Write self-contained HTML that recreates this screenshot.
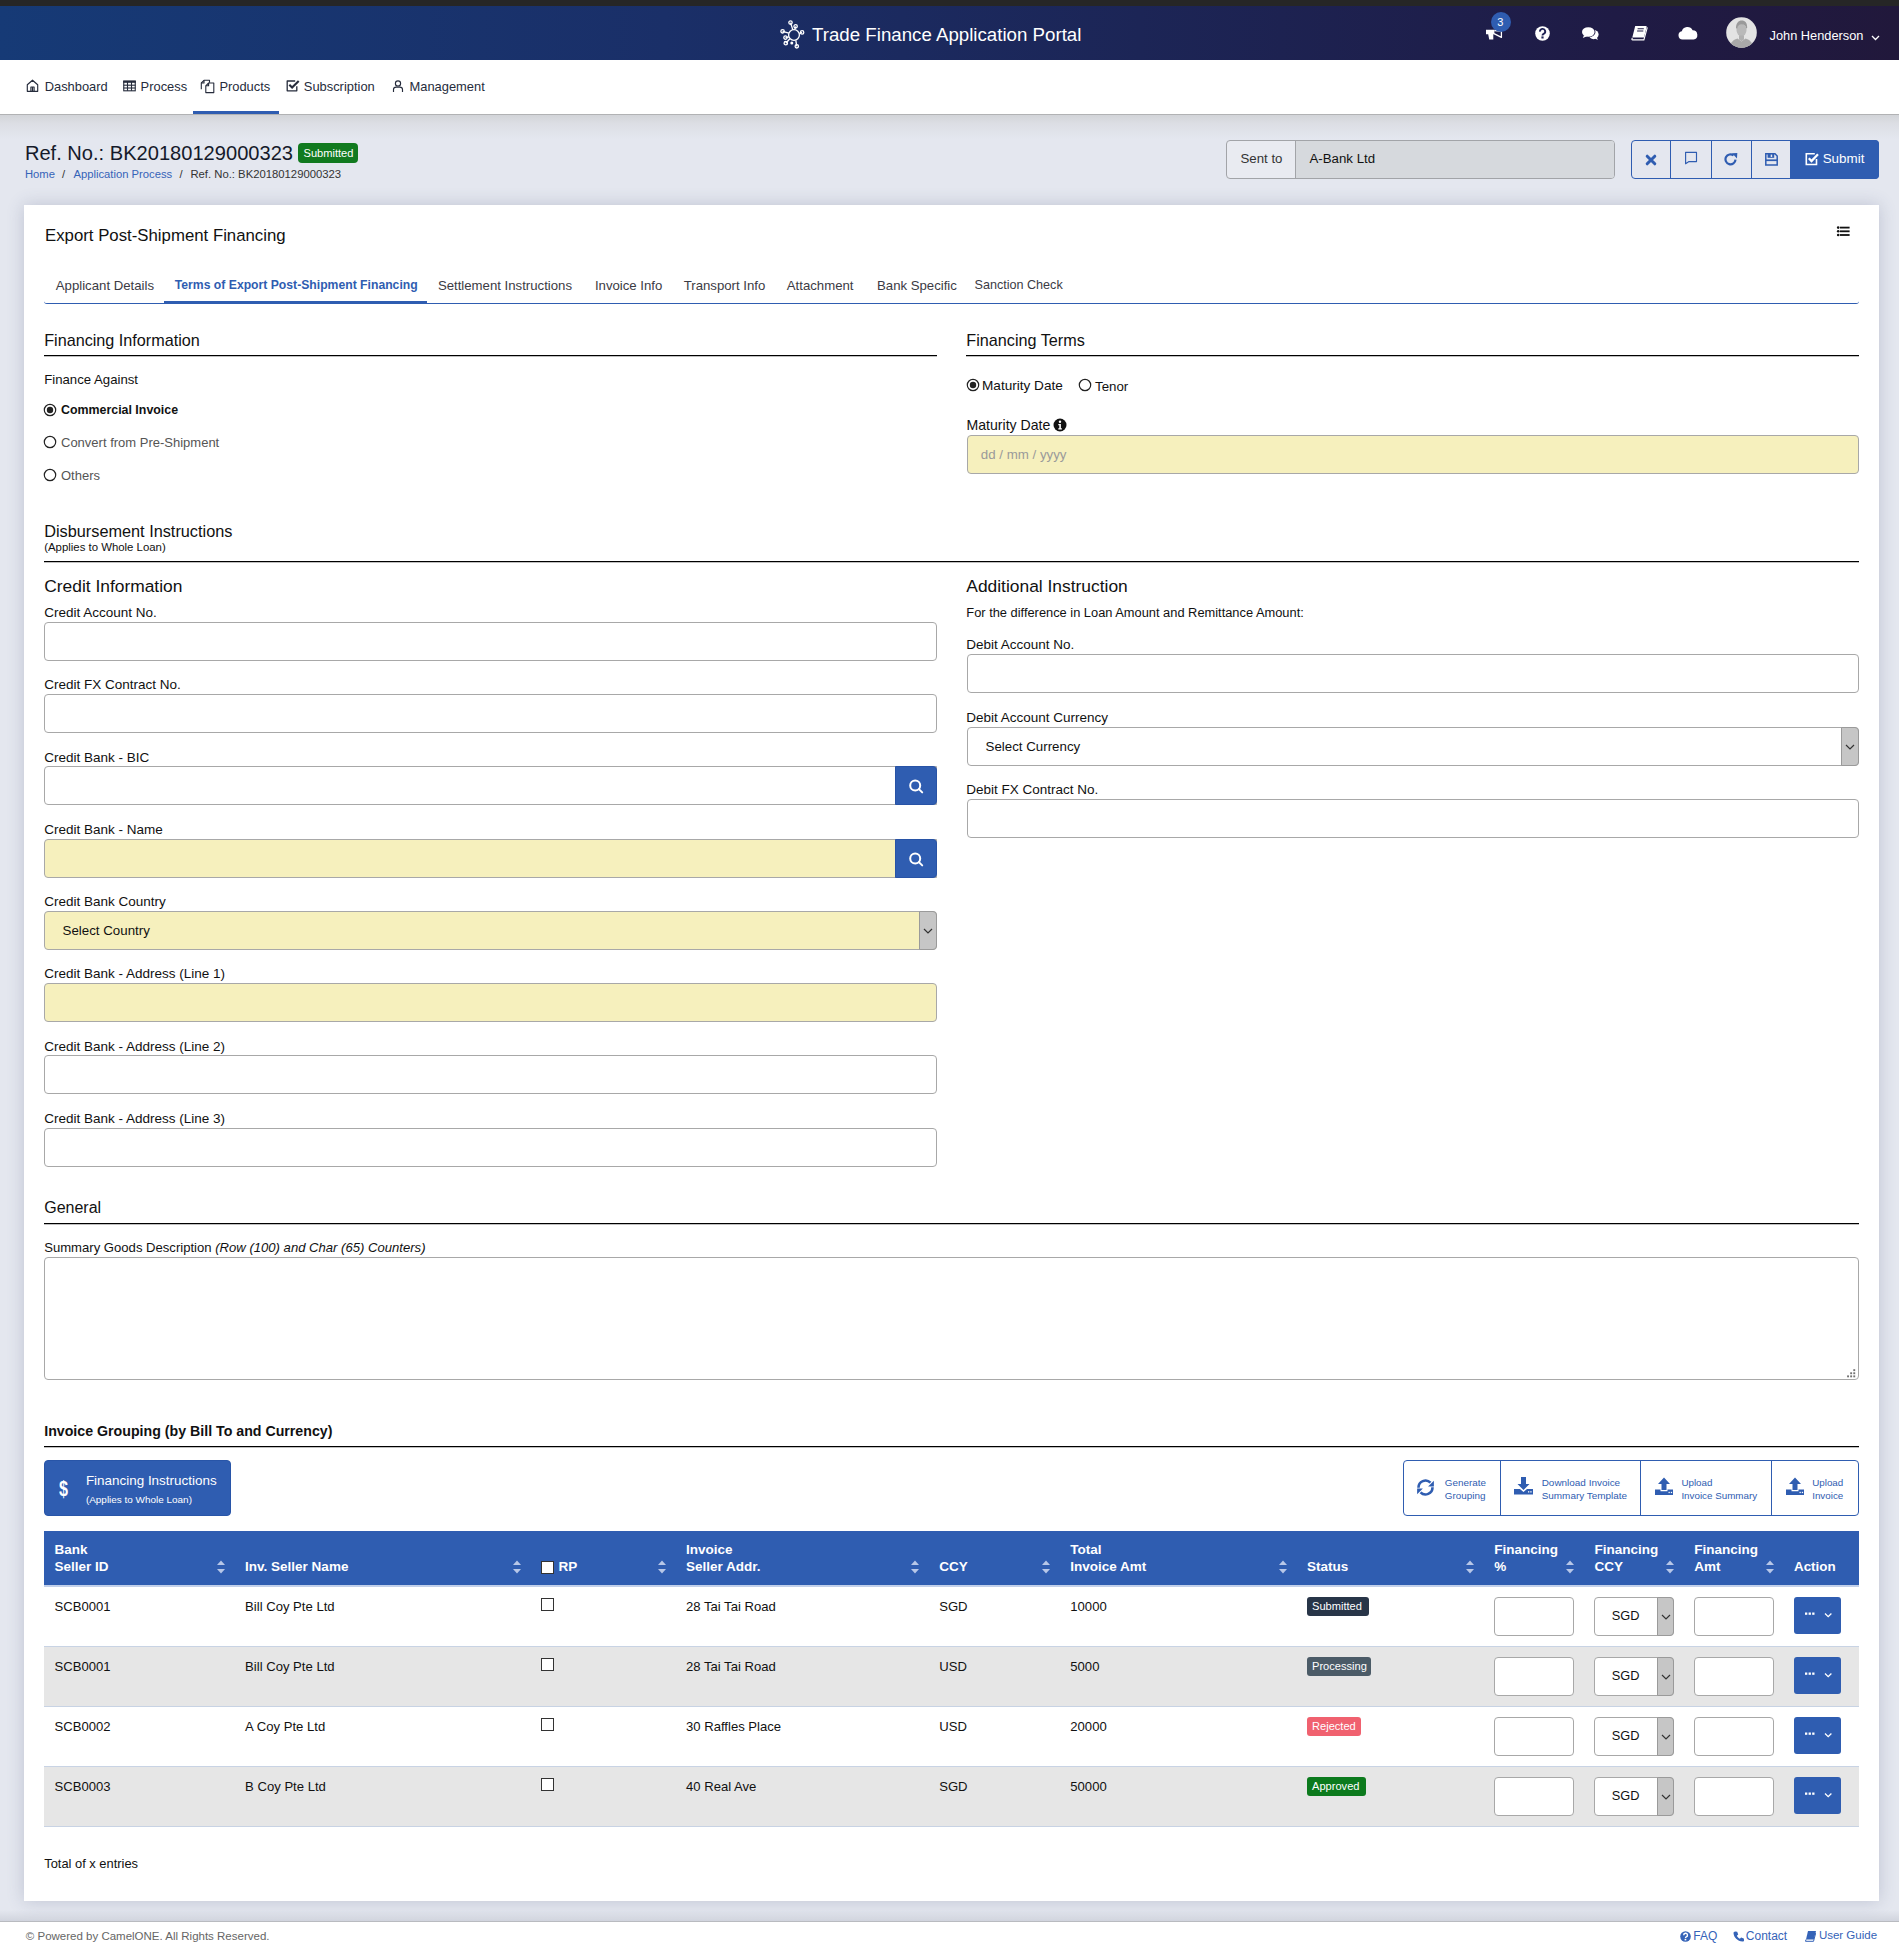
<!DOCTYPE html>
<html><head><meta charset="utf-8">
<style>
*{box-sizing:border-box;margin:0;padding:0}
html,body{width:1899px;height:1949px;overflow:hidden}
body{font-family:"Liberation Sans",sans-serif;background:#e4e7ef;position:relative}
.t{position:absolute;white-space:nowrap}
.b{position:absolute;display:block}
</style></head><body>
<div class="b" style="left:0px;top:0px;width:1899px;height:6px;background:#262626"></div>
<div class="b" style="left:0px;top:6px;width:1899px;height:54px;background:linear-gradient(90deg,#163a76 0%,#1a2f68 35%,#1c2556 60%,#1f1b45 85%,#21183b 100%)"></div>
<div class="b" style="left:0px;top:60px;width:1899px;height:54px;background:#fff"></div>
<div class="b" style="left:0px;top:114px;width:1899px;height:1px;background:#b1b2b4"></div>
<div class="b" style="left:0px;top:115px;width:1899px;height:24px;background:linear-gradient(180deg,#d2d4d8 0%,#dcdee4 35%,#e4e7ef 100%)"></div>
<svg class="b" style="left:780px;top:20px;" width="28" height="30" viewBox="0 0 28 30"><g fill="none" stroke="#fff" stroke-width="1.3"><circle cx="14" cy="15" r="5.4"/><line x1="12.8" y1="9.8" x2="10.5" y2="2.6"/><circle cx="10.5" cy="2.6" r="1.7"/><line x1="14.8" y1="9.7" x2="15.6" y2="6.3"/><circle cx="15.6" cy="6.3" r="1.7"/><line x1="8.8" y1="13.2" x2="2.6" y2="11.3"/><circle cx="2.6" cy="11.3" r="1.7"/><line x1="19.3" y1="13.6" x2="22.1" y2="12.4"/><circle cx="22.1" cy="12.4" r="1.7"/><line x1="8.9" y1="16.8" x2="5.5" y2="17.6"/><circle cx="5.5" cy="17.6" r="1.7"/><line x1="9.8" y1="18.8" x2="5.8" y2="23.2"/><circle cx="5.8" cy="23.2" r="1.7"/><line x1="15.8" y1="20.3" x2="16.8" y2="26.3"/><circle cx="16.8" cy="26.3" r="1.7"/></g><circle cx="11.8" cy="22.9" r="1.5" fill="#fff"/></svg>
<div class="t" style="left:812px;top:25.97px;font-size:18.7px;line-height:18.7px;color:#fff;">Trade Finance Application Portal</div>
<svg class="b" style="left:1484px;top:28px;" width="20" height="14" viewBox="0 0 20 14"><path fill="#fff" d="M2 1.8H10.4V6.2H9.3V11.6H5.2L4.2 6.2H2z"/><path fill="none" stroke="#fff" stroke-width="1.3" stroke-linejoin="round" d="M10 5.6L17.4 9.4V3L10.4 2.5"/></svg>
<div class="b" style="left:1491px;top:12px;width:20px;height:20px;background:#2f5db1;border-radius:50%"></div>
<div class="t" style="left:1497.2px;top:16.99px;font-size:11px;line-height:11px;color:#fff;">3</div>
<svg class="b" style="left:1535px;top:26px;" width="15" height="15" viewBox="0 0 15 15"><circle cx="7.5" cy="7.5" r="7.3" fill="#fff"/><path d="M5 5.6a2.6 2.6 0 1 1 3.6 2.3c-.8.4-1.1.8-1.1 1.6" fill="none" stroke="#1f2254" stroke-width="1.9"/><rect x="6.4" y="10.4" width="2.2" height="2.1" fill="#1f2254"/></svg>
<svg class="b" style="left:1581px;top:26px;" width="19" height="15" viewBox="0 0 19 15"><ellipse cx="12.6" cy="8.6" rx="5" ry="4.6" fill="#fff"/><path d="M13.8 12.2l3 1.8-1-3z" fill="#fff"/><ellipse cx="7.3" cy="6" rx="7.2" ry="5.4" fill="#201c45"/><ellipse cx="7.3" cy="6" rx="6.3" ry="4.8" fill="#fff"/><path d="M3 9.2L1.8 12l4.2-1.8z" fill="#fff"/></svg>
<svg class="b" style="left:1631px;top:25px;" width="17" height="16" viewBox="0 0 17 16"><path fill="#fff" d="M4.2 1h10.6c.7 0 1 .4.8 1L13 12.6H1.3z"/><path fill="none" stroke="#fff" stroke-width="1.1" d="M1.3 12.8L.9 14.2c-.1.5.1.7.6.7h11.4l3.4-12.6"/><path d="M6.6 3.8h6.2M6.1 6h6.2" stroke="#201c45" stroke-width="1.1"/></svg>
<svg class="b" style="left:1678px;top:26px;" width="20" height="14" viewBox="0 0 20 14"><path fill="#fff" d="M4.5 13.5A4.2 4.2 0 0 1 3.8 5.2 5.8 5.8 0 0 1 14.6 4.2 4.7 4.7 0 0 1 15.6 13.5z"/></svg>
<svg class="b" style="left:1726px;top:17px;" width="31" height="31" viewBox="0 0 31 31"><defs><clipPath id="avc"><circle cx="15.5" cy="15.5" r="15.3"/></clipPath></defs><circle cx="15.5" cy="15.5" r="15.3" fill="#e3e3e3"/><g clip-path="url(#avc)"><path fill="#a9a9a9" d="M4 31c0-6 4-8.5 7.5-9.5l4 3 4-3c3.5 1 7.5 3.5 7.5 9.5z"/><ellipse cx="15.5" cy="13" rx="5" ry="6.3" fill="#b9b9b9"/><path fill="#9a9a9a" d="M10 11c0-5 2.5-7.5 5.7-7.5 3.5 0 5.5 2.5 5.5 7.2l-1 .8c-.3-3-2-4-4.6-4.2-2.4.2-4 1.3-4.5 4.5z"/><path fill="#b0b0b0" d="M13 18.5h5v4l-2.5 1.8-2.5-1.8z"/></g></svg>
<div class="t" style="left:1769.5px;top:29.96px;font-size:12.8px;line-height:12.8px;color:#fff;">John Henderson</div>
<svg class="b" style="left:1871px;top:35px;" width="9" height="6" viewBox="0 0 9 6"><path d="M1 1l3.5 3.5L8 1" fill="none" stroke="#fff" stroke-width="1.3"/></svg>
<svg class="b" style="left:26px;top:79px;" width="13" height="14" viewBox="0 0 13 14"><g fill="none" stroke="#262c3c" stroke-width="1.15" stroke-linejoin="round"><path d="M1.3 12.3V5.8L6.5 1.2l5.2 4.6v6.5z"/><path d="M4.9 12.3V8h3.2v4.3M6.5 8v4.3"/></g></svg>
<div class="t" style="left:44.7px;top:81.08px;font-size:12.9px;line-height:12.9px;color:#262c3c;">Dashboard</div>
<svg class="b" style="left:123px;top:80px;" width="13" height="12" viewBox="0 0 13 12"><g fill="none" stroke="#262c3c" stroke-width="1.1"><rect x="0.75" y="1.2" width="11.5" height="9.6"/><line x1="0.6" y1="5.2" x2="12.4" y2="5.2"/><line x1="0.6" y1="8" x2="12.4" y2="8"/><line x1="4.5" y1="1.5" x2="4.5" y2="10.8"/><line x1="8.5" y1="1.5" x2="8.5" y2="10.8"/></g><rect x="0.2" y="0.6" width="12.6" height="2.2" fill="#262c3c"/></svg>
<div class="t" style="left:140.6px;top:81.08px;font-size:12.9px;line-height:12.9px;color:#262c3c;">Process</div>
<svg class="b" style="left:200px;top:79px;" width="16" height="15" viewBox="0 0 16 15"><g fill="none" stroke="#262c3c" stroke-width="1.1" stroke-linejoin="round"><path d="M1.3 10.3V4L4 1.3h5.5v2.5"/><path d="M4 1.3V4H1.3"/><path d="M5.8 13.6V6.8l2.8-2.8h5.2v9.6z"/><path d="M8.6 4v2.8H5.8"/></g></svg>
<div class="t" style="left:219.4px;top:81.08px;font-size:12.9px;line-height:12.9px;color:#262c3c;">Products</div>
<div class="b" style="left:193px;top:111px;width:86px;height:3px;background:#2f5db1"></div>
<svg class="b" style="left:286px;top:79px;" width="14" height="13" viewBox="0 0 14 13"><path d="M10.8 7.2v4.6H1.2V2h8" fill="none" stroke="#262c3c" stroke-width="1.3" stroke-linejoin="round"/><path d="M3.3 5.8l2.8 2.8 6.6-6.6" fill="none" stroke="#262c3c" stroke-width="2.1"/></svg>
<div class="t" style="left:303.8px;top:81.08px;font-size:12.9px;line-height:12.9px;color:#262c3c;">Subscription</div>
<svg class="b" style="left:392px;top:79px;" width="12" height="14" viewBox="0 0 12 14"><g fill="none" stroke="#262c3c" stroke-width="1.15"><circle cx="6" cy="4.4" r="2.6"/><path d="M1.5 13V10.6c0-1.6 1-2.5 2.6-2.5h3.8c1.6 0 2.6.9 2.6 2.5V13"/></g></svg>
<div class="t" style="left:409.5px;top:81.08px;font-size:12.9px;line-height:12.9px;color:#262c3c;">Management</div>
<div class="t" style="left:24.9px;top:142.79px;font-size:20.1px;line-height:20.1px;color:#151a2a;">Ref. No.: BK20180129000323</div>
<div class="b" style="left:298px;top:143px;width:60px;height:20px;background:#117a1f;border-radius:4px"></div>
<div class="t" style="left:303.5px;top:147.60px;font-size:11.1px;line-height:11.1px;color:#fff;">Submitted</div>
<div class="t" style="left:24.9px;top:169.38px;font-size:11.25px;line-height:11.25px;color:#3563b8;">Home</div>
<div class="t" style="left:62px;top:169.38px;font-size:11.25px;line-height:11.25px;color:#333;">/</div>
<div class="t" style="left:73.4px;top:169.38px;font-size:11.25px;line-height:11.25px;color:#3563b8;">Application Process</div>
<div class="t" style="left:179.5px;top:169.38px;font-size:11.25px;line-height:11.25px;color:#333;">/</div>
<div class="t" style="left:190.4px;top:169.33px;font-size:11.3px;line-height:11.3px;color:#333;">Ref. No.: BK20180129000323</div>
<div class="b" style="left:1226px;top:140px;width:389px;height:39px;border:1px solid #a2a4a8;border-radius:4px;background:#e9ebf1;overflow:hidden"></div>
<div class="b" style="left:1295px;top:141px;width:319px;height:37px;background:#d6d9dd;border-left:1px solid #a2a4a8;border-radius:0 3px 3px 0"></div>
<div class="t" style="left:1240.5px;top:152.18px;font-size:13.25px;line-height:13.25px;color:#333;">Sent to</div>
<div class="t" style="left:1309.5px;top:152.18px;font-size:13.25px;line-height:13.25px;color:#111;">A-Bank Ltd</div>
<div class="b" style="left:1631px;top:140px;width:248px;height:39px;border:1px solid #2f5db1;border-radius:4px;overflow:hidden"></div>
<div class="b" style="left:1670px;top:140px;width:1px;height:39px;background:#2f5db1"></div>
<div class="b" style="left:1711px;top:140px;width:1px;height:39px;background:#2f5db1"></div>
<div class="b" style="left:1751px;top:140px;width:1px;height:39px;background:#2f5db1"></div>
<div class="b" style="left:1790px;top:140px;width:89px;height:39px;background:#2f5db1;border-radius:0 4px 4px 0"></div>
<svg class="b" style="left:1645px;top:154px;" width="12" height="12" viewBox="0 0 12 12"><path d="M2.2 2.2l7.6 7.6M9.8 2.2l-7.6 7.6" stroke="#2f5db1" stroke-width="3" stroke-linecap="round"/></svg>
<svg class="b" style="left:1684px;top:151px;" width="14" height="14" viewBox="0 0 14 14"><path d="M1.5 1.4h11v9.2H5L1.6 12.8V1.4z" fill="none" stroke="#2f5db1" stroke-width="1.15" stroke-linejoin="round"/></svg>
<svg class="b" style="left:1724px;top:152px;" width="15" height="14" viewBox="0 0 15 14"><path d="M11.5 7.6A5 5 0 1 1 9.6 3.4" fill="none" stroke="#2f5db1" stroke-width="2.2"/><path d="M8 1.2l5.3-.2-.3 5.5z" fill="#2f5db1"/></svg>
<svg class="b" style="left:1765px;top:153px;" width="13" height="13" viewBox="0 0 13 13"><path d="M.8 .8H10L12.2 3V11.9H.8Z" fill="none" stroke="#2f5db1" stroke-width="1.5"/><rect x="2.6" y="0.8" width="6.6" height="4" fill="#2f5db1"/><rect x="5.7" y="1.6" width="1.5" height="2.4" fill="#e6e9f0"/><rect x="0.8" y="6.4" width="11.4" height="1.7" fill="#2f5db1"/></svg>
<svg class="b" style="left:1805px;top:152px;" width="14" height="14" viewBox="0 0 14 14"><path d="M11.5 7v5.5H1.3V1.8h8.5" fill="none" stroke="#fff" stroke-width="1.6"/><path d="M3.8 6.3l2.7 2.7L13 2.2" fill="none" stroke="#fff" stroke-width="2.3"/></svg>
<div class="t" style="left:1822.7px;top:152.06px;font-size:13.4px;line-height:13.4px;color:#fff;">Submit</div>
<div class="b" style="left:24px;top:205px;width:1855px;height:1696px;background:#fff;box-shadow:0 0 16px rgba(70,80,120,.24)"></div>
<div class="t" style="left:45px;top:227.88px;font-size:16.8px;line-height:16.8px;color:#111;">Export Post-Shipment Financing</div>
<svg class="b" style="left:1836px;top:224px;" width="16" height="14" viewBox="0 0 16 14"><g fill="#111"><circle cx="2.2" cy="3.6" r="1.3"/><circle cx="2.2" cy="7.3" r="1.3"/><circle cx="2.2" cy="11" r="1.3"/><rect x="4" y="2.7" width="9.6" height="1.8"/><rect x="4" y="6.4" width="9.6" height="1.8"/><rect x="4" y="10.1" width="9.6" height="1.8"/></g></svg>
<div class="b" style="left:44px;top:294px;width:1815px;height:10px;border-bottom:1px solid #2f5db1;border-radius:0 0 3px 3px"></div>
<div class="t" style="left:55.8px;top:278.83px;font-size:13.2px;line-height:13.2px;color:#3b3b44;">Applicant Details</div>
<div class="t" style="left:174.8px;top:278.67px;font-size:12.2px;line-height:12.2px;color:#2f5db1;font-weight:700;">Terms of Export Post-Shipment Financing</div>
<div class="b" style="left:164px;top:301px;width:263px;height:3px;background:#2f5db1"></div>
<div class="t" style="left:437.9px;top:278.83px;font-size:13.2px;line-height:13.2px;color:#3b3b44;">Settlement Instructions</div>
<div class="t" style="left:594.9px;top:278.83px;font-size:13.2px;line-height:13.2px;color:#3b3b44;">Invoice Info</div>
<div class="t" style="left:683.7px;top:278.83px;font-size:13.2px;line-height:13.2px;color:#3b3b44;">Transport Info</div>
<div class="t" style="left:786.8px;top:278.83px;font-size:13.2px;line-height:13.2px;color:#3b3b44;">Attachment</div>
<div class="t" style="left:877px;top:278.83px;font-size:13.2px;line-height:13.2px;color:#3b3b44;">Bank Specific</div>
<div class="t" style="left:974.5px;top:279.33px;font-size:12.6px;line-height:12.6px;color:#3b3b44;">Sanction Check</div>
<div class="t" style="left:44.2px;top:331.79px;font-size:16.2px;line-height:16.2px;color:#111;">Financing Information</div>
<div class="b" style="left:44px;top:355px;width:893px;height:1px;background:#000"></div>
<div class="b" style="left:44px;top:356px;width:893px;height:1px;background:rgba(0,0,0,.25)"></div>
<div class="t" style="left:44.2px;top:372.83px;font-size:13.2px;line-height:13.2px;color:#111;">Finance Against</div>
<svg class="b" style="left:43.4px;top:402.5px;" width="14" height="14" viewBox="0 0 14 14"><circle cx="7" cy="7" r="5.7" fill="#fff" stroke="#222" stroke-width="1.2"/><circle cx="7" cy="7" r="3.2" fill="#222"/></svg>
<div class="t" style="left:61px;top:403.50px;font-size:12.4px;line-height:12.4px;color:#111;font-weight:700;">Commercial Invoice</div>
<svg class="b" style="left:43.4px;top:435.4px;" width="14" height="14" viewBox="0 0 14 14"><circle cx="7" cy="7" r="5.7" fill="#fff" stroke="#222" stroke-width="1.2"/></svg>
<div class="t" style="left:61px;top:436.00px;font-size:13px;line-height:13px;color:#555;">Convert from Pre-Shipment</div>
<svg class="b" style="left:43.4px;top:468.3px;" width="14" height="14" viewBox="0 0 14 14"><circle cx="7" cy="7" r="5.7" fill="#fff" stroke="#222" stroke-width="1.2"/></svg>
<div class="t" style="left:61px;top:469.00px;font-size:13px;line-height:13px;color:#555;">Others</div>
<div class="t" style="left:966.3px;top:331.79px;font-size:16.2px;line-height:16.2px;color:#111;">Financing Terms</div>
<div class="b" style="left:966px;top:355px;width:893px;height:1px;background:#000"></div>
<div class="b" style="left:966px;top:356px;width:893px;height:1px;background:rgba(0,0,0,.25)"></div>
<svg class="b" style="left:966.4px;top:377.5px;" width="14" height="14" viewBox="0 0 14 14"><circle cx="7" cy="7" r="5.7" fill="#fff" stroke="#222" stroke-width="1.2"/><circle cx="7" cy="7" r="3.2" fill="#222"/></svg>
<div class="t" style="left:982px;top:379.49px;font-size:13.6px;line-height:13.6px;color:#111;">Maturity Date</div>
<svg class="b" style="left:1078.2px;top:377.5px;" width="14" height="14" viewBox="0 0 14 14"><circle cx="7" cy="7" r="5.7" fill="#fff" stroke="#222" stroke-width="1.2"/></svg>
<div class="t" style="left:1095px;top:379.74px;font-size:13.3px;line-height:13.3px;color:#111;">Tenor</div>
<div class="t" style="left:966.5px;top:418.06px;font-size:14.1px;line-height:14.1px;color:#111;">Maturity Date</div>
<svg class="b" style="left:1053px;top:418px;" width="14" height="14" viewBox="0 0 14 14"><circle cx="7" cy="7" r="6.5" fill="#111"/><circle cx="7" cy="3.8" r="1.2" fill="#fff"/><path d="M5.3 6h2.6v4.3h1v1.3H5.3v-1.3h1V7.3h-1z" fill="#fff"/></svg>
<div class="b" style="left:967px;top:435px;width:892px;height:39px;border:1px solid #a8a8a8;border-radius:4px;background:#f6f0bd;"></div>
<div class="t" style="left:980.8px;top:447.74px;font-size:13.3px;line-height:13.3px;color:#9a9a9a;">dd / mm / yyyy</div>
<div class="t" style="left:44.2px;top:523.20px;font-size:16.3px;line-height:16.3px;color:#111;">Disbursement Instructions</div>
<div class="t" style="left:44.2px;top:541.95px;font-size:11.4px;line-height:11.4px;color:#111;">(Applies to Whole Loan)</div>
<div class="b" style="left:44px;top:561px;width:1815px;height:1px;background:#000"></div>
<div class="b" style="left:44px;top:562px;width:1815px;height:1px;background:rgba(0,0,0,.25)"></div>
<div class="t" style="left:44.2px;top:577.67px;font-size:17.4px;line-height:17.4px;color:#111;">Credit Information</div>
<div class="t" style="left:44.2px;top:605.97px;font-size:13.5px;line-height:13.5px;color:#111;">Credit Account No.</div>
<div class="b" style="left:44px;top:622px;width:893px;height:39px;border:1px solid #a8a8a8;border-radius:4px;background:#fff;"></div>
<div class="t" style="left:44.2px;top:678.27px;font-size:13.5px;line-height:13.5px;color:#111;">Credit FX Contract No.</div>
<div class="b" style="left:44px;top:694px;width:893px;height:39px;border:1px solid #a8a8a8;border-radius:4px;background:#fff;"></div>
<div class="t" style="left:44.2px;top:751.17px;font-size:13.5px;line-height:13.5px;color:#111;">Credit Bank - BIC</div>
<div class="b" style="left:44px;top:766px;width:893px;height:39px;border:1px solid #a8a8a8;border-radius:4px;background:#fff;border-radius:4px 0 0 4px"></div>
<div class="b" style="left:895px;top:766px;width:42px;height:39px;background:#2f5db1;border:1px solid #2853a6;border-radius:0 4px 4px 0"></div>
<svg class="b" style="left:907px;top:777px;" width="18" height="18" viewBox="0 0 18 18"><circle cx="8.2" cy="8.4" r="5" fill="none" stroke="#fff" stroke-width="2"/><path d="M11.9 12.1l3.3 3.3" stroke="#fff" stroke-width="2" stroke-linecap="round"/></svg>
<div class="t" style="left:44.2px;top:823.17px;font-size:13.5px;line-height:13.5px;color:#111;">Credit Bank - Name</div>
<div class="b" style="left:44px;top:839px;width:893px;height:39px;border:1px solid #a8a8a8;border-radius:4px;background:#f6f0bd;border-radius:4px 0 0 4px"></div>
<div class="b" style="left:895px;top:839px;width:42px;height:39px;background:#2f5db1;border:1px solid #2853a6;border-radius:0 4px 4px 0"></div>
<svg class="b" style="left:907px;top:850px;" width="18" height="18" viewBox="0 0 18 18"><circle cx="8.2" cy="8.4" r="5" fill="none" stroke="#fff" stroke-width="2"/><path d="M11.9 12.1l3.3 3.3" stroke="#fff" stroke-width="2" stroke-linecap="round"/></svg>
<div class="t" style="left:44.2px;top:894.87px;font-size:13.5px;line-height:13.5px;color:#111;">Credit Bank Country</div>
<div class="b" style="left:44px;top:911px;width:893px;height:39px;border:1px solid #a8a8a8;border-radius:4px;background:#f6f0bd;"></div>
<div class="b" style="left:919px;top:911px;width:18px;height:39px;background:#c6c6c6;border:1px solid #9a9a9a;border-radius:0 4px 4px 0"></div>
<svg class="b" style="left:923px;top:927.5px;" width="10" height="6" viewBox="0 0 10 6"><path d="M1 1l4 4 4-4" fill="none" stroke="#333" stroke-width="1.2"/></svg>
<div class="t" style="left:62.6px;top:924.04px;font-size:13.3px;line-height:13.3px;color:#111;">Select Country</div>
<div class="t" style="left:44.2px;top:966.57px;font-size:13.5px;line-height:13.5px;color:#111;">Credit Bank - Address (Line 1)</div>
<div class="b" style="left:44px;top:983px;width:893px;height:39px;border:1px solid #a8a8a8;border-radius:4px;background:#f6f0bd;"></div>
<div class="t" style="left:44.2px;top:1039.57px;font-size:13.5px;line-height:13.5px;color:#111;">Credit Bank - Address (Line 2)</div>
<div class="b" style="left:44px;top:1055px;width:893px;height:39px;border:1px solid #a8a8a8;border-radius:4px;background:#fff;"></div>
<div class="t" style="left:44.2px;top:1111.97px;font-size:13.5px;line-height:13.5px;color:#111;">Credit Bank - Address (Line 3)</div>
<div class="b" style="left:44px;top:1128px;width:893px;height:39px;border:1px solid #a8a8a8;border-radius:4px;background:#fff;"></div>
<div class="t" style="left:966.3px;top:577.67px;font-size:17.4px;line-height:17.4px;color:#111;">Additional Instruction</div>
<div class="t" style="left:966.3px;top:606.52px;font-size:12.85px;line-height:12.85px;color:#111;">For the difference in Loan Amount and Remittance Amount:</div>
<div class="t" style="left:966.3px;top:637.57px;font-size:13.5px;line-height:13.5px;color:#111;">Debit Account No.</div>
<div class="b" style="left:967px;top:654px;width:892px;height:39px;border:1px solid #a8a8a8;border-radius:4px;background:#fff;"></div>
<div class="t" style="left:966.3px;top:710.57px;font-size:13.5px;line-height:13.5px;color:#111;">Debit Account Currency</div>
<div class="b" style="left:967px;top:727px;width:892px;height:39px;border:1px solid #a8a8a8;border-radius:4px;background:#fff;"></div>
<div class="b" style="left:1841px;top:727px;width:18px;height:39px;background:#c6c6c6;border:1px solid #9a9a9a;border-radius:0 4px 4px 0"></div>
<svg class="b" style="left:1845px;top:743.5px;" width="10" height="6" viewBox="0 0 10 6"><path d="M1 1l4 4 4-4" fill="none" stroke="#333" stroke-width="1.2"/></svg>
<div class="t" style="left:985.6px;top:740.04px;font-size:13.3px;line-height:13.3px;color:#111;">Select Currency</div>
<div class="t" style="left:966.3px;top:782.57px;font-size:13.5px;line-height:13.5px;color:#111;">Debit FX Contract No.</div>
<div class="b" style="left:967px;top:799px;width:892px;height:39px;border:1px solid #a8a8a8;border-radius:4px;background:#fff;"></div>
<div class="t" style="left:44.2px;top:1199.66px;font-size:16px;line-height:16px;color:#111;">General</div>
<div class="b" style="left:44px;top:1223px;width:1815px;height:1px;background:#000"></div>
<div class="b" style="left:44px;top:1224px;width:1815px;height:1px;background:rgba(0,0,0,.25)"></div>
<div class="t" style="left:44.2px;top:1240.91px;font-size:13.1px;line-height:13.1px;color:#111;">Summary Goods Description <i>(Row (100) and Char (65) Counters)</i></div>
<div class="b" style="left:44px;top:1257px;width:1815px;height:123px;border:1px solid #a8a8a8;border-radius:4px;background:#fff"></div>
<svg class="b" style="left:1846px;top:1367px;" width="11" height="11" viewBox="0 0 11 11"><g fill="#727272"><rect x="7.3" y="2.2" width="1.9" height="1.9"/><rect x="4.2" y="5.3" width="1.9" height="1.9"/><rect x="7.3" y="5.3" width="1.9" height="1.9"/><rect x="1.1" y="8.4" width="1.9" height="1.9"/><rect x="4.2" y="8.4" width="1.9" height="1.9"/><rect x="7.3" y="8.4" width="1.9" height="1.9"/></g></svg>
<div class="t" style="left:44.2px;top:1423.98px;font-size:14.2px;line-height:14.2px;color:#111;font-weight:700;">Invoice Grouping (by Bill To and Currency)</div>
<div class="b" style="left:44px;top:1446px;width:1815px;height:1px;background:#000"></div>
<div class="b" style="left:44px;top:1447px;width:1815px;height:1px;background:rgba(0,0,0,.25)"></div>
<div class="b" style="left:44px;top:1460px;width:187px;height:56px;background:#2f5db1;border:1px solid #2855a8;border-radius:4px"></div>
<div class="t" style="left:59px;top:1477.95px;font-size:22.5px;line-height:22.5px;color:#fff;font-weight:700;transform:scaleX(.72);transform-origin:0 0">$</div>
<div class="t" style="left:85.9px;top:1473.61px;font-size:13.45px;line-height:13.45px;color:#fff;">Financing Instructions</div>
<div class="t" style="left:85.9px;top:1494.58px;font-size:9.95px;line-height:9.95px;color:#fff;">(Applies to Whole Loan)</div>
<div class="b" style="left:1403px;top:1460px;width:456px;height:56px;border:1px solid #2f5db1;border-radius:4px"></div>
<div class="b" style="left:1500px;top:1460px;width:1px;height:56px;background:#2f5db1"></div>
<div class="b" style="left:1640px;top:1460px;width:1px;height:56px;background:#2f5db1"></div>
<div class="b" style="left:1771px;top:1460px;width:1px;height:56px;background:#2f5db1"></div>
<svg class="b" style="left:1416px;top:1478px;" width="19" height="19" viewBox="0 0 19 19"><g transform="translate(0.5,0.5)"><path d="M2 9.2A7 7 0 0 1 14 4.2" fill="none" stroke="#2f5db1" stroke-width="2.6"/><path d="M17.4 2.2V8H11.6z" fill="#2f5db1"/><path d="M16 8.8A7 7 0 0 1 4 13.8" fill="none" stroke="#2f5db1" stroke-width="2.6"/><path d="M0.6 15.8V10H6.4z" fill="#2f5db1"/></g></svg>
<div class="t" style="left:1444.8px;top:1477.62px;font-size:9.9px;line-height:9.9px;color:#2f5db1;">Generate</div>
<div class="t" style="left:1444.8px;top:1490.62px;font-size:9.9px;line-height:9.9px;color:#2f5db1;">Grouping</div>
<svg class="b" style="left:1513px;top:1476px;" width="21" height="19" viewBox="0 0 21 19"><path d="M8 1h5v7h3.5L10.5 14 4.5 8H8z" fill="#2f5db1"/><path d="M1 13h6l3.5 3 3.5-3h6v5.5H1z" fill="#2f5db1"/><rect x="15" y="15.2" width="1.3" height="1.3" fill="#fff"/><rect x="17.3" y="15.2" width="1.3" height="1.3" fill="#fff"/></svg>
<div class="t" style="left:1541.7px;top:1477.58px;font-size:9.95px;line-height:9.95px;color:#2f5db1;">Download Invoice</div>
<div class="t" style="left:1541.7px;top:1490.58px;font-size:9.95px;line-height:9.95px;color:#2f5db1;">Summary Template</div>
<svg class="b" style="left:1654px;top:1477px;" width="20" height="18" viewBox="0 0 20 18"><path d="M10 0.5l6 6.5h-3.5v6h-5V7H4z" fill="#2f5db1"/><path d="M1 12.5h5.5v1.8h7v-1.8H19V18H1z" fill="#2f5db1"/><rect x="14.5" y="14.8" width="1.3" height="1.3" fill="#fff"/><rect x="16.8" y="14.8" width="1.3" height="1.3" fill="#fff"/></svg>
<div class="t" style="left:1681.4px;top:1477.70px;font-size:9.8px;line-height:9.8px;color:#2f5db1;">Upload</div>
<div class="t" style="left:1681.4px;top:1490.70px;font-size:9.8px;line-height:9.8px;color:#2f5db1;">Invoice Summary</div>
<svg class="b" style="left:1785px;top:1477px;" width="20" height="18" viewBox="0 0 20 18"><path d="M10 0.5l6 6.5h-3.5v6h-5V7H4z" fill="#2f5db1"/><path d="M1 12.5h5.5v1.8h7v-1.8H19V18H1z" fill="#2f5db1"/><rect x="14.5" y="14.8" width="1.3" height="1.3" fill="#fff"/><rect x="16.8" y="14.8" width="1.3" height="1.3" fill="#fff"/></svg>
<div class="t" style="left:1812.2px;top:1477.70px;font-size:9.8px;line-height:9.8px;color:#2f5db1;">Upload</div>
<div class="t" style="left:1812.2px;top:1490.70px;font-size:9.8px;line-height:9.8px;color:#2f5db1;">Invoice</div>
<div class="b" style="left:44px;top:1531px;width:1815px;height:54px;background:#2f5db1"></div>
<div class="b" style="left:44px;top:1585px;width:1815px;height:2px;background:#c2d0ea"></div>
<div class="t" style="left:54.5px;top:1542.57px;font-size:13.5px;line-height:13.5px;color:#fff;font-weight:700;">Bank</div>
<div class="t" style="left:54.5px;top:1559.57px;font-size:13.5px;line-height:13.5px;color:#fff;font-weight:700;">Seller ID</div>
<svg class="b" style="left:215.6px;top:1559px;" width="10" height="16" viewBox="0 0 10 16"><path d="M5 1.5l4 4.5H1z" fill="#b7c7e8"/><path d="M5 14.5l4-4.5H1z" fill="#b7c7e8"/></svg>
<div class="t" style="left:245.1px;top:1559.57px;font-size:13.5px;line-height:13.5px;color:#fff;font-weight:700;">Inv. Seller Name</div>
<svg class="b" style="left:512px;top:1559px;" width="10" height="16" viewBox="0 0 10 16"><path d="M5 1.5l4 4.5H1z" fill="#b7c7e8"/><path d="M5 14.5l4-4.5H1z" fill="#b7c7e8"/></svg>
<div class="b" style="left:541px;top:1561px;width:13px;height:13px;background:#fff;border:1px solid #333"></div>
<div class="t" style="left:558.4px;top:1559.57px;font-size:13.5px;line-height:13.5px;color:#fff;font-weight:700;">RP</div>
<svg class="b" style="left:656.5px;top:1559px;" width="10" height="16" viewBox="0 0 10 16"><path d="M5 1.5l4 4.5H1z" fill="#b7c7e8"/><path d="M5 14.5l4-4.5H1z" fill="#b7c7e8"/></svg>
<div class="t" style="left:686px;top:1542.57px;font-size:13.5px;line-height:13.5px;color:#fff;font-weight:700;">Invoice</div>
<div class="t" style="left:686px;top:1559.57px;font-size:13.5px;line-height:13.5px;color:#fff;font-weight:700;">Seller Addr.</div>
<svg class="b" style="left:910px;top:1559px;" width="10" height="16" viewBox="0 0 10 16"><path d="M5 1.5l4 4.5H1z" fill="#b7c7e8"/><path d="M5 14.5l4-4.5H1z" fill="#b7c7e8"/></svg>
<div class="t" style="left:939.2px;top:1559.57px;font-size:13.5px;line-height:13.5px;color:#fff;font-weight:700;">CCY</div>
<svg class="b" style="left:1041px;top:1559px;" width="10" height="16" viewBox="0 0 10 16"><path d="M5 1.5l4 4.5H1z" fill="#b7c7e8"/><path d="M5 14.5l4-4.5H1z" fill="#b7c7e8"/></svg>
<div class="t" style="left:1070.3px;top:1542.57px;font-size:13.5px;line-height:13.5px;color:#fff;font-weight:700;">Total</div>
<div class="t" style="left:1070.3px;top:1559.57px;font-size:13.5px;line-height:13.5px;color:#fff;font-weight:700;">Invoice Amt</div>
<svg class="b" style="left:1277.5px;top:1559px;" width="10" height="16" viewBox="0 0 10 16"><path d="M5 1.5l4 4.5H1z" fill="#b7c7e8"/><path d="M5 14.5l4-4.5H1z" fill="#b7c7e8"/></svg>
<div class="t" style="left:1307px;top:1559.57px;font-size:13.5px;line-height:13.5px;color:#fff;font-weight:700;">Status</div>
<svg class="b" style="left:1464.5px;top:1559px;" width="10" height="16" viewBox="0 0 10 16"><path d="M5 1.5l4 4.5H1z" fill="#b7c7e8"/><path d="M5 14.5l4-4.5H1z" fill="#b7c7e8"/></svg>
<div class="t" style="left:1494.2px;top:1542.57px;font-size:13.5px;line-height:13.5px;color:#fff;font-weight:700;">Financing</div>
<div class="t" style="left:1494.2px;top:1559.57px;font-size:13.5px;line-height:13.5px;color:#fff;font-weight:700;">%</div>
<svg class="b" style="left:1565px;top:1559px;" width="10" height="16" viewBox="0 0 10 16"><path d="M5 1.5l4 4.5H1z" fill="#b7c7e8"/><path d="M5 14.5l4-4.5H1z" fill="#b7c7e8"/></svg>
<div class="t" style="left:1594.5px;top:1542.57px;font-size:13.5px;line-height:13.5px;color:#fff;font-weight:700;">Financing</div>
<div class="t" style="left:1594.5px;top:1559.57px;font-size:13.5px;line-height:13.5px;color:#fff;font-weight:700;">CCY</div>
<svg class="b" style="left:1664.6px;top:1559px;" width="10" height="16" viewBox="0 0 10 16"><path d="M5 1.5l4 4.5H1z" fill="#b7c7e8"/><path d="M5 14.5l4-4.5H1z" fill="#b7c7e8"/></svg>
<div class="t" style="left:1694.2px;top:1542.57px;font-size:13.5px;line-height:13.5px;color:#fff;font-weight:700;">Financing</div>
<div class="t" style="left:1694.2px;top:1559.57px;font-size:13.5px;line-height:13.5px;color:#fff;font-weight:700;">Amt</div>
<svg class="b" style="left:1765px;top:1559px;" width="10" height="16" viewBox="0 0 10 16"><path d="M5 1.5l4 4.5H1z" fill="#b7c7e8"/><path d="M5 14.5l4-4.5H1z" fill="#b7c7e8"/></svg>
<div class="t" style="left:1794px;top:1559.66px;font-size:13.4px;line-height:13.4px;color:#fff;font-weight:700;">Action</div>
<div class="b" style="left:44px;top:1587px;width:1815px;height:59px;background:#fff"></div>
<div class="b" style="left:44px;top:1646px;width:1815px;height:1px;background:#c8d3e4"></div>
<div class="t" style="left:54.5px;top:1600.31px;font-size:13.1px;line-height:13.1px;color:#111;">SCB0001</div>
<div class="t" style="left:245.1px;top:1600.31px;font-size:13.1px;line-height:13.1px;color:#111;">Bill Coy Pte Ltd</div>
<div class="b" style="left:541px;top:1598px;width:13px;height:13px;background:#fff;border:1px solid #333"></div>
<div class="t" style="left:686px;top:1600.31px;font-size:13.1px;line-height:13.1px;color:#111;">28 Tai Tai Road</div>
<div class="t" style="left:939.2px;top:1600.31px;font-size:13.1px;line-height:13.1px;color:#111;">SGD</div>
<div class="t" style="left:1070.3px;top:1600.31px;font-size:13.1px;line-height:13.1px;color:#111;">10000</div>
<div class="b" style="left:1307px;top:1597px;width:62px;height:19px;background:#283548;border-radius:3px"></div>
<div class="t" style="left:1312px;top:1601.00px;font-size:11.1px;line-height:11.1px;color:#fff;">Submitted</div>
<div class="b" style="left:1494px;top:1597px;width:80px;height:39px;border:1px solid #a8a8a8;border-radius:4px;background:#fff;"></div>
<div class="b" style="left:1594px;top:1597px;width:80px;height:39px;border:1px solid #a8a8a8;border-radius:4px;background:#fff;"></div>
<div class="b" style="left:1657px;top:1597px;width:17px;height:39px;background:#c6c6c6;border:1px solid #9a9a9a;border-radius:0 4px 4px 0"></div>
<svg class="b" style="left:1661px;top:1613.5px;" width="10" height="6" viewBox="0 0 10 6"><path d="M1 1l4 4 4-4" fill="none" stroke="#333" stroke-width="1.2"/></svg>
<div class="t" style="left:1611.8px;top:1610.46px;font-size:12.8px;line-height:12.8px;color:#111;">SGD</div>
<div class="b" style="left:1694px;top:1597px;width:80px;height:39px;border:1px solid #a8a8a8;border-radius:4px;background:#fff;"></div>
<div class="b" style="left:1794px;top:1597px;width:47px;height:37px;background:#2f5db1;border-radius:3px"></div>
<svg class="b" style="left:1804px;top:1611px;" width="30" height="8" viewBox="0 0 30 8"><g fill="#fff"><rect x="1" y="1.5" width="2.3" height="2.3"/><rect x="4.6" y="1.5" width="2.3" height="2.3"/><rect x="8.2" y="1.5" width="2.3" height="2.3"/></g><path d="M21 2.5l3.2 3.2 3.2-3.2" fill="none" stroke="#fff" stroke-width="1.3"/></svg>
<div class="b" style="left:44px;top:1647px;width:1815px;height:59px;background:#e6e6e6"></div>
<div class="b" style="left:44px;top:1706px;width:1815px;height:1px;background:#c8d3e4"></div>
<div class="t" style="left:54.5px;top:1660.31px;font-size:13.1px;line-height:13.1px;color:#111;">SCB0001</div>
<div class="t" style="left:245.1px;top:1660.31px;font-size:13.1px;line-height:13.1px;color:#111;">Bill Coy Pte Ltd</div>
<div class="b" style="left:541px;top:1658px;width:13px;height:13px;background:#fff;border:1px solid #333"></div>
<div class="t" style="left:686px;top:1660.31px;font-size:13.1px;line-height:13.1px;color:#111;">28 Tai Tai Road</div>
<div class="t" style="left:939.2px;top:1660.31px;font-size:13.1px;line-height:13.1px;color:#111;">USD</div>
<div class="t" style="left:1070.3px;top:1660.31px;font-size:13.1px;line-height:13.1px;color:#111;">5000</div>
<div class="b" style="left:1307px;top:1657px;width:64px;height:19px;background:#4b5b67;border-radius:3px"></div>
<div class="t" style="left:1312px;top:1661.00px;font-size:11.1px;line-height:11.1px;color:#fff;">Processing</div>
<div class="b" style="left:1494px;top:1657px;width:80px;height:39px;border:1px solid #a8a8a8;border-radius:4px;background:#fff;"></div>
<div class="b" style="left:1594px;top:1657px;width:80px;height:39px;border:1px solid #a8a8a8;border-radius:4px;background:#fff;"></div>
<div class="b" style="left:1657px;top:1657px;width:17px;height:39px;background:#c6c6c6;border:1px solid #9a9a9a;border-radius:0 4px 4px 0"></div>
<svg class="b" style="left:1661px;top:1673.5px;" width="10" height="6" viewBox="0 0 10 6"><path d="M1 1l4 4 4-4" fill="none" stroke="#333" stroke-width="1.2"/></svg>
<div class="t" style="left:1611.8px;top:1670.46px;font-size:12.8px;line-height:12.8px;color:#111;">SGD</div>
<div class="b" style="left:1694px;top:1657px;width:80px;height:39px;border:1px solid #a8a8a8;border-radius:4px;background:#fff;"></div>
<div class="b" style="left:1794px;top:1657px;width:47px;height:37px;background:#2f5db1;border-radius:3px"></div>
<svg class="b" style="left:1804px;top:1671px;" width="30" height="8" viewBox="0 0 30 8"><g fill="#fff"><rect x="1" y="1.5" width="2.3" height="2.3"/><rect x="4.6" y="1.5" width="2.3" height="2.3"/><rect x="8.2" y="1.5" width="2.3" height="2.3"/></g><path d="M21 2.5l3.2 3.2 3.2-3.2" fill="none" stroke="#fff" stroke-width="1.3"/></svg>
<div class="b" style="left:44px;top:1707px;width:1815px;height:59px;background:#fff"></div>
<div class="b" style="left:44px;top:1766px;width:1815px;height:1px;background:#c8d3e4"></div>
<div class="t" style="left:54.5px;top:1720.31px;font-size:13.1px;line-height:13.1px;color:#111;">SCB0002</div>
<div class="t" style="left:245.1px;top:1720.31px;font-size:13.1px;line-height:13.1px;color:#111;">A Coy Pte Ltd</div>
<div class="b" style="left:541px;top:1718px;width:13px;height:13px;background:#fff;border:1px solid #333"></div>
<div class="t" style="left:686px;top:1720.31px;font-size:13.1px;line-height:13.1px;color:#111;">30 Raffles Place</div>
<div class="t" style="left:939.2px;top:1720.31px;font-size:13.1px;line-height:13.1px;color:#111;">USD</div>
<div class="t" style="left:1070.3px;top:1720.31px;font-size:13.1px;line-height:13.1px;color:#111;">20000</div>
<div class="b" style="left:1307px;top:1717px;width:54px;height:19px;background:#f0616f;border-radius:3px"></div>
<div class="t" style="left:1312px;top:1721.00px;font-size:11.1px;line-height:11.1px;color:#fff;">Rejected</div>
<div class="b" style="left:1494px;top:1717px;width:80px;height:39px;border:1px solid #a8a8a8;border-radius:4px;background:#fff;"></div>
<div class="b" style="left:1594px;top:1717px;width:80px;height:39px;border:1px solid #a8a8a8;border-radius:4px;background:#fff;"></div>
<div class="b" style="left:1657px;top:1717px;width:17px;height:39px;background:#c6c6c6;border:1px solid #9a9a9a;border-radius:0 4px 4px 0"></div>
<svg class="b" style="left:1661px;top:1733.5px;" width="10" height="6" viewBox="0 0 10 6"><path d="M1 1l4 4 4-4" fill="none" stroke="#333" stroke-width="1.2"/></svg>
<div class="t" style="left:1611.8px;top:1730.46px;font-size:12.8px;line-height:12.8px;color:#111;">SGD</div>
<div class="b" style="left:1694px;top:1717px;width:80px;height:39px;border:1px solid #a8a8a8;border-radius:4px;background:#fff;"></div>
<div class="b" style="left:1794px;top:1717px;width:47px;height:37px;background:#2f5db1;border-radius:3px"></div>
<svg class="b" style="left:1804px;top:1731px;" width="30" height="8" viewBox="0 0 30 8"><g fill="#fff"><rect x="1" y="1.5" width="2.3" height="2.3"/><rect x="4.6" y="1.5" width="2.3" height="2.3"/><rect x="8.2" y="1.5" width="2.3" height="2.3"/></g><path d="M21 2.5l3.2 3.2 3.2-3.2" fill="none" stroke="#fff" stroke-width="1.3"/></svg>
<div class="b" style="left:44px;top:1767px;width:1815px;height:59px;background:#e6e6e6"></div>
<div class="b" style="left:44px;top:1826px;width:1815px;height:1px;background:#c8d3e4"></div>
<div class="t" style="left:54.5px;top:1780.31px;font-size:13.1px;line-height:13.1px;color:#111;">SCB0003</div>
<div class="t" style="left:245.1px;top:1780.31px;font-size:13.1px;line-height:13.1px;color:#111;">B Coy Pte Ltd</div>
<div class="b" style="left:541px;top:1778px;width:13px;height:13px;background:#fff;border:1px solid #333"></div>
<div class="t" style="left:686px;top:1780.31px;font-size:13.1px;line-height:13.1px;color:#111;">40 Real Ave</div>
<div class="t" style="left:939.2px;top:1780.31px;font-size:13.1px;line-height:13.1px;color:#111;">SGD</div>
<div class="t" style="left:1070.3px;top:1780.31px;font-size:13.1px;line-height:13.1px;color:#111;">50000</div>
<div class="b" style="left:1307px;top:1777px;width:59px;height:19px;background:#0c7a1d;border-radius:3px"></div>
<div class="t" style="left:1312px;top:1781.00px;font-size:11.1px;line-height:11.1px;color:#fff;">Approved</div>
<div class="b" style="left:1494px;top:1777px;width:80px;height:39px;border:1px solid #a8a8a8;border-radius:4px;background:#fff;"></div>
<div class="b" style="left:1594px;top:1777px;width:80px;height:39px;border:1px solid #a8a8a8;border-radius:4px;background:#fff;"></div>
<div class="b" style="left:1657px;top:1777px;width:17px;height:39px;background:#c6c6c6;border:1px solid #9a9a9a;border-radius:0 4px 4px 0"></div>
<svg class="b" style="left:1661px;top:1793.5px;" width="10" height="6" viewBox="0 0 10 6"><path d="M1 1l4 4 4-4" fill="none" stroke="#333" stroke-width="1.2"/></svg>
<div class="t" style="left:1611.8px;top:1790.46px;font-size:12.8px;line-height:12.8px;color:#111;">SGD</div>
<div class="b" style="left:1694px;top:1777px;width:80px;height:39px;border:1px solid #a8a8a8;border-radius:4px;background:#fff;"></div>
<div class="b" style="left:1794px;top:1777px;width:47px;height:37px;background:#2f5db1;border-radius:3px"></div>
<svg class="b" style="left:1804px;top:1791px;" width="30" height="8" viewBox="0 0 30 8"><g fill="#fff"><rect x="1" y="1.5" width="2.3" height="2.3"/><rect x="4.6" y="1.5" width="2.3" height="2.3"/><rect x="8.2" y="1.5" width="2.3" height="2.3"/></g><path d="M21 2.5l3.2 3.2 3.2-3.2" fill="none" stroke="#fff" stroke-width="1.3"/></svg>
<div class="t" style="left:44.2px;top:1858.28px;font-size:12.9px;line-height:12.9px;color:#111;">Total of x entries</div>
<div class="b" style="left:0px;top:1910px;width:1899px;height:11px;background:linear-gradient(180deg,rgba(0,0,0,0) 0%,rgba(40,45,70,.10) 100%)"></div>
<div class="b" style="left:0px;top:1921px;width:1899px;height:28px;background:#fff;border-top:1px solid #b9bbc0"></div>
<div class="t" style="left:25.8px;top:1930.57px;font-size:11.5px;line-height:11.5px;color:#666;">© Powered by CamelONE. All Rights Reserved.</div>
<svg class="b" style="left:1680px;top:1931px;" width="11" height="11" viewBox="0 0 11 11"><circle cx="5.5" cy="5.5" r="5.3" fill="#3563b8"/><path d="M3.7 4.2a1.9 1.9 0 1 1 2.6 1.7c-.6.3-.8.6-.8 1.2" fill="none" stroke="#fff" stroke-width="1.4"/><rect x="4.6" y="7.8" width="1.7" height="1.6" fill="#fff"/></svg>
<div class="t" style="left:1693.3px;top:1929.84px;font-size:12px;line-height:12px;color:#3563b8;">FAQ</div>
<svg class="b" style="left:1733px;top:1931px;" width="11" height="11" viewBox="0 0 11 11"><path d="M2.2 0.5l2 .3 1 2.7-1.3 1.2c.6 1.4 1.6 2.4 3 3l1.2-1.3 2.7 1 .3 2c-.2.7-.8 1.2-1.6 1.2C4.5 10.3.7 6.5.5 2.1.5 1.3 1.2.7 2.2.5z" fill="#3563b8"/></svg>
<div class="t" style="left:1745.8px;top:1929.84px;font-size:12px;line-height:12px;color:#3563b8;">Contact</div>
<svg class="b" style="left:1805px;top:1931px;" width="11" height="11" viewBox="0 0 11 11"><path fill="#3563b8" d="M3 0h8l-2.2 8.5H1z"/><path fill="none" stroke="#3563b8" stroke-width="1" d="M1 8.5L.5 10.3h8l2.3-8.5"/></svg>
<div class="t" style="left:1818.9px;top:1930.27px;font-size:11.5px;line-height:11.5px;color:#3563b8;">User Guide</div>
</body></html>
